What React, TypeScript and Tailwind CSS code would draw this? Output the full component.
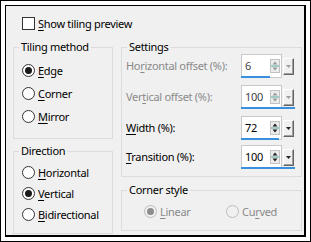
import type { ReactNode } from 'react';

const font = { fontFamily: '"Noto Sans", "Open Sans", sans-serif' };

function Key({ children }: { children: ReactNode }) {
  return <span className="underline underline-offset-[2px]">{children}</span>;
}

function Radio({ checked, disabled }: { checked?: boolean; disabled?: boolean }) {
  return (
    <span
      className={`flex items-center justify-center w-[13px] h-[13px] rounded-full border shrink-0 ${
        disabled ? 'border-[#bcbcbc] bg-[#f0f0f0]' : 'border-[#333333] bg-white'
      }`}
    >
      {checked && <span className={`w-[7px] h-[7px] rounded-full ${disabled ? 'bg-[#8d8d8d]' : 'bg-[#1a1a1a]'}`} />}
    </span>
  );
}

function RadioRow({ label, checked, disabled, className = '' }: { label: ReactNode; checked?: boolean; disabled?: boolean; className?: string }) {
  return (
    <div className={`flex items-center gap-[3px] whitespace-nowrap ${disabled ? 'text-[#8a8a8a]' : 'text-black'} ${className}`}>
      <Radio checked={checked} disabled={disabled} />
      <span>{label}</span>
    </div>
  );
}

function Group({ title, className, children }: { title: string; className: string; children: ReactNode }) {
  return (
    <fieldset className={`border border-[#dcdcdc] ${className}`}>
      <legend className="ml-[5px] px-[2px] leading-[14px]">{title}</legend>
      {children}
    </fieldset>
  );
}

function Spin({ value, bar, disabled }: { value: string; bar: string; disabled?: boolean }) {
  return (
    <div className="relative flex items-center w-[54px] h-[24px]">
      <div className="flex items-center h-full w-[41px] bg-white border border-[#c9c9c9] pl-[3px]">
        <span className={`flex-1 ${disabled ? 'text-[#444444]' : 'text-black'}`}>{value}</span>
        <svg width="10" height="14" viewBox="0 0 10 14" className="mr-[1px]">
          <rect x="0.5" y="0.5" width="9" height="13" fill="#ececec" stroke="#c2c2c2" />
          <path d="M5 2.5 L7.5 5.5 L2.5 5.5 Z" fill={disabled ? '#9a9a9a' : '#222'} />
          <path d="M1 7 H9" stroke="#5aa89e" strokeWidth="1" />
          <path d="M2.5 8.5 L7.5 8.5 L5 11.5 Z" fill={disabled ? '#9a9a9a' : '#222'} />
        </svg>
      </div>
      <div className="ml-[1px] flex items-center justify-center w-[11px] h-[17px] bg-[#f0f0f0] border-t border-l border-white border-r border-b border-r-[#646464] border-b-[#646464] shadow-[inset_-1px_-1px_0_#a0a0a0]">
        <svg width="5" height="3" viewBox="0 0 5 3">
          <path d="M0 0 H5 L2.5 3 Z" fill={disabled ? '#9a9a9a' : '#222'} />
        </svg>
      </div>
      <div className={`absolute left-0 bottom-0 h-[2px] bg-[#3b8fdf] ${bar}`} />
    </div>
  );
}

function SettingRow({ label, value, bar, disabled, className = '' }: { label: ReactNode; value: string; bar: string; disabled?: boolean; className?: string }) {
  return (
    <div className={`flex items-center pl-[4px] ${className}`}>
      <span className={`w-[115px] whitespace-nowrap ${disabled ? 'text-[#8a8a8a]' : 'text-black'}`}>{label}</span>
      <Spin value={value} bar={bar} disabled={disabled} />
    </div>
  );
}

export default function App() {
  return (
    <div className="w-[311px] h-[242px] bg-white border border-black p-[4px] text-[11px] leading-[16px] tracking-[-0.3px]" style={font}>
      <div className="flex flex-col h-full bg-[#f0f0f0] border-l border-t border-r-2 border-b-2 border-black">
        <label className="flex items-center gap-[3px] ml-[16px] mt-[11px] h-[13px]">
          <span className="w-[13px] h-[13px] border border-[#333333] bg-white shrink-0" />
          <span>
            <Key>S</Key>how tiling preview
          </span>
        </label>

        <div className="flex gap-[8px] ml-[7px] mt-[10px]">
          <div className="flex flex-col gap-[5px] w-[100px]">
            <Group title="Tiling method" className="h-[99px]">
              <div className="flex flex-col pl-[8px] pt-[5px]">
                <RadioRow className="h-[23px]" checked label={<><Key>E</Key>dge</>} />
                <RadioRow className="h-[23px]" label={<><Key>C</Key>orner</>} />
                <RadioRow className="h-[23px]" label={<><Key>M</Key>irror</>} />
              </div>
            </Group>
            <Group title="Direction" className="h-[90px]">
              <div className="flex flex-col pl-[8px] pt-[4px]">
                <RadioRow className="h-[21px]" label={<><Key>H</Key>orizontal</>} />
                <RadioRow className="h-[21px]" checked label={<><Key>V</Key>ertical</>} />
                <RadioRow className="h-[21px]" label={<><Key>B</Key>idirectional</>} />
              </div>
            </Group>
          </div>

          <div className="flex flex-col gap-[6px] w-[181px]">
            <Group title="Settings" className="h-[137px]">
              <div className="flex flex-col">
                <SettingRow disabled value="6" bar="w-[29px]" label={<>Ho<Key>r</Key>izontal offset (%):</>} />
                <SettingRow className="mt-[7px]" disabled value="100" bar="w-[54px]" label={<>Ver<Key>t</Key>ical offset (%):</>} />
                <SettingRow className="mt-[7px]" value="72" bar="w-[38px]" label={<><Key>W</Key>idth (%):</>} />
                <SettingRow className="mt-[5px]" value="100" bar="w-[54px]" label={<><Key>T</Key>ransition (%):</>} />
              </div>
            </Group>
            <Group title="Corner style" className="h-[48px]">
              <div className="flex items-center h-[21px] mt-[4px] pl-[22px]">
                <RadioRow className="w-[82px]" checked disabled label={<><Key>L</Key>inear</>} />
                <RadioRow disabled label={<>Cu<Key>r</Key>ved</>} />
              </div>
            </Group>
          </div>
        </div>
      </div>
    </div>
  );
}
